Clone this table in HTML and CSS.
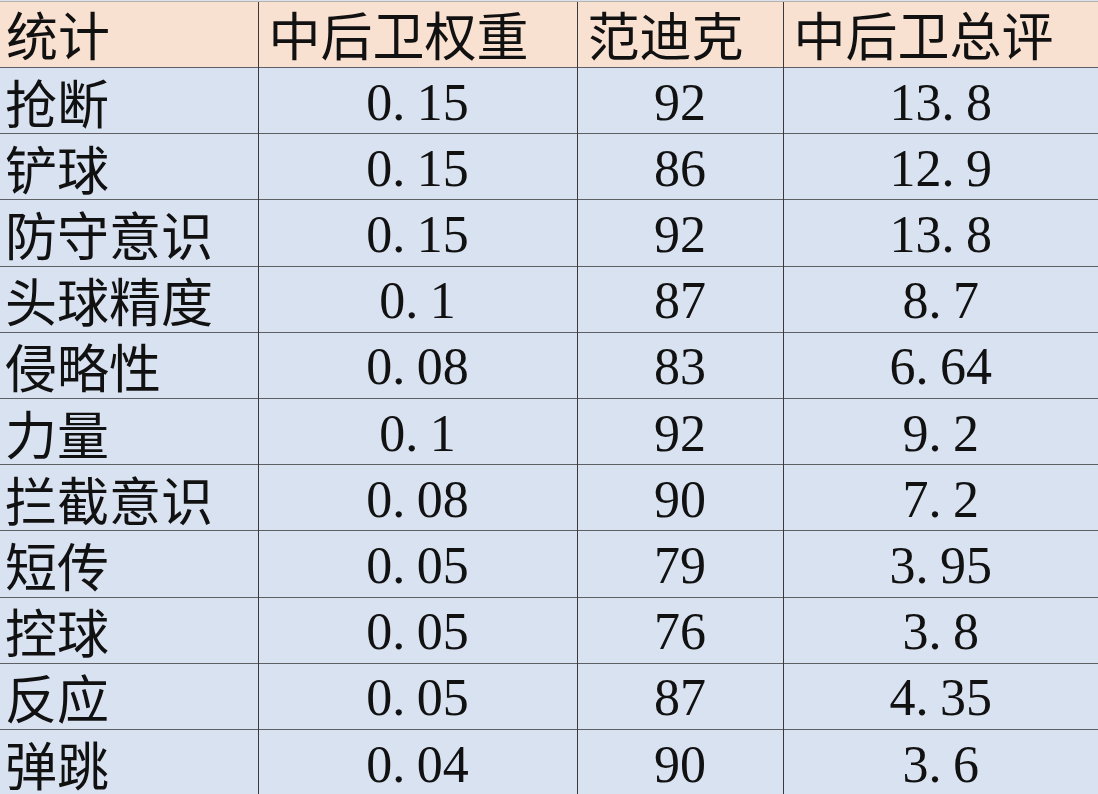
FILE: index.html
```html
<!DOCTYPE html>
<html lang="zh">
<head>
<meta charset="utf-8">
<title>中后卫总评</title>
<link rel="stylesheet" href="styles.css">
</head>
<body>
<table class="sheet">
  <colgroup>
    <col class="c1"><col class="c2"><col class="c3"><col class="c4">
  </colgroup>
  <thead>
    <tr><th>统计</th><th>中后卫权重</th><th>范迪克</th><th>中后卫总评</th></tr>
  </thead>
  <tbody>
    <tr><td class="name">抢断</td><td>0<span class="dot">.</span>15</td><td>92</td><td>13<span class="dot">.</span>8</td></tr>
    <tr><td class="name">铲球</td><td>0<span class="dot">.</span>15</td><td>86</td><td>12<span class="dot">.</span>9</td></tr>
    <tr><td class="name">防守意识</td><td>0<span class="dot">.</span>15</td><td>92</td><td>13<span class="dot">.</span>8</td></tr>
    <tr><td class="name">头球精度</td><td>0<span class="dot">.</span>1</td><td>87</td><td>8<span class="dot">.</span>7</td></tr>
    <tr><td class="name">侵略性</td><td>0<span class="dot">.</span>08</td><td>83</td><td>6<span class="dot">.</span>64</td></tr>
    <tr><td class="name">力量</td><td>0<span class="dot">.</span>1</td><td>92</td><td>9<span class="dot">.</span>2</td></tr>
    <tr><td class="name">拦截意识</td><td>0<span class="dot">.</span>08</td><td>90</td><td>7<span class="dot">.</span>2</td></tr>
    <tr><td class="name">短传</td><td>0<span class="dot">.</span>05</td><td>79</td><td>3<span class="dot">.</span>95</td></tr>
    <tr><td class="name">控球</td><td>0<span class="dot">.</span>05</td><td>76</td><td>3<span class="dot">.</span>8</td></tr>
    <tr><td class="name">反应</td><td>0<span class="dot">.</span>05</td><td>87</td><td>4<span class="dot">.</span>35</td></tr>
    <tr><td class="name">弹跳</td><td>0<span class="dot">.</span>04</td><td>90</td><td>3<span class="dot">.</span>6</td></tr>
  </tbody>
</table>
</body>
</html>
```
FILE: styles.css
```css
html, body {
  margin: 0;
  padding: 0;
  background: #d9e2f1;
}
body {
  width: 1098px;
  height: 794px;
  overflow: hidden;
}
.sheet {
  width: 1098px;
  table-layout: fixed;
  border-collapse: collapse;
  margin-top: 1px;
  color: #111;
}
.c1 { width: 258px; }
.c2 { width: 319px; }
.c3 { width: 206px; }
.c4 { width: 315px; }

.sheet th,
.sheet td {
  border-left: 1px solid #3a3a3a;
  border-top: 1px solid #5e6066;
  padding: 0;
  vertical-align: middle;
  white-space: nowrap;
}
.sheet th:first-child,
.sheet td:first-child {
  border-left: none;
}
.sheet thead tr {
  height: 66px;
  background: #f9e1d2;
}
.sheet thead th {
  text-align: left;
  font-family: "Noto Sans CJK SC", sans-serif;
  font-weight: 400;
  font-size: 52px;
  line-height: 62px;
  padding: 0 0 2px 10px;
  border-top: 1px solid #b9b0aa;
}
.sheet thead th:first-child {
  padding-left: 6px;
}
.sheet tbody tr {
  height: 66.2px;
  background: #d9e2f1;
}
.sheet tbody td {
  text-align: center;
  font-family: "Liberation Serif", "Times New Roman", serif;
  font-size: 52px;
  line-height: 60px;
  padding-top: 4px;
}
.sheet tbody td.name {
  text-align: left;
  font-family: "Noto Sans CJK SC", sans-serif;
  font-size: 52px;
  line-height: 62px;
  padding-left: 5px;
  padding-top: 2px;
}
.dot {
  padding-right: 0.22em;
}
```
